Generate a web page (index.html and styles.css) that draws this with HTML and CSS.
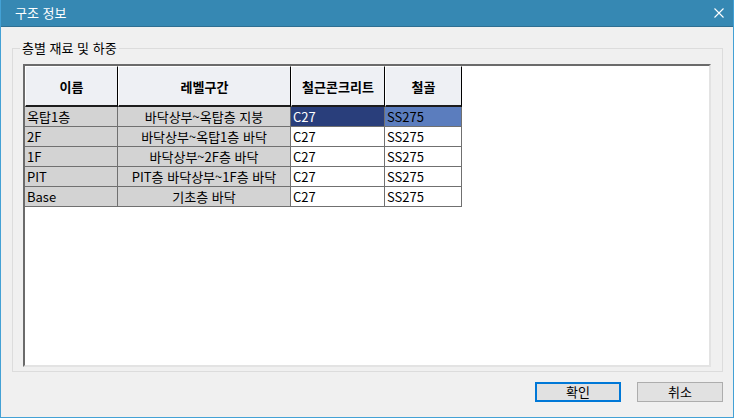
FILE: index.html
```html
<!DOCTYPE html>
<html lang="ko">
<head>
  <meta charset="UTF-8">
  <title>구조 정보</title>
  <link rel="stylesheet" href="styles.css">
</head>
<body>
  <div class="window">
    <div class="titlebar">
      <span class="title">구조 정보</span>
      <span class="close">
        <svg width="10" height="10" viewBox="0 0 10 10"><path d="M0.5 0.5 L9.5 9.5 M9.5 0.5 L0.5 9.5" stroke="#fff" stroke-width="1.1" fill="none"/></svg>
      </span>
    </div>

    <fieldset class="group">
      <legend>층별 재료 및 하중</legend>
      <div class="grid">
        <table>
          <thead>
            <tr>
              <th class="c1">이름</th>
              <th class="c2">레벨구간</th>
              <th class="c3">철근콘크리트</th>
              <th class="c4">철골</th>
            </tr>
          </thead>
          <tbody>
            <tr>
              <td class="ro">옥탑1층</td>
              <td class="ro mid">바닥상부~옥탑층 지붕</td>
              <td class="sel">C27</td>
              <td class="sel2">SS275</td>
            </tr>
            <tr>
              <td class="ro">2F</td>
              <td class="ro mid">바닥상부~옥탑1층 바닥</td>
              <td>C27</td>
              <td>SS275</td>
            </tr>
            <tr>
              <td class="ro">1F</td>
              <td class="ro mid">바닥상부~2F층 바닥</td>
              <td>C27</td>
              <td>SS275</td>
            </tr>
            <tr>
              <td class="ro">PIT</td>
              <td class="ro mid">PIT층 바닥상부~1F층 바닥</td>
              <td>C27</td>
              <td>SS275</td>
            </tr>
            <tr>
              <td class="ro">Base</td>
              <td class="ro mid">기초층 바닥</td>
              <td>C27</td>
              <td>SS275</td>
            </tr>
          </tbody>
        </table>
      </div>
    </fieldset>

    <div class="buttons">
      <button class="btn default">확인</button>
      <button class="btn">취소</button>
    </div>
  </div>
</body>
</html>
```

FILE: styles.css
```css
body { margin: 0; font-family: "Noto Sans CJK KR", "Noto Sans", sans-serif; font-size: 13px; color: #000; }
.window { width: 734px; height: 418px; box-sizing: border-box; border: 1px solid #43a1d5; border-top: none; background: #f0f0f0; }
.titlebar { display: flex; align-items: center; justify-content: space-between; height: 27px; background: #3688b3; border-bottom: 1px solid #2f6f92; box-sizing: border-box; color: #fff; }
.title { padding-left: 14px; line-height: 26px; }
.close { display: flex; margin-right: 9px; }

.group { margin: 13px 10px 0 11px; padding: 0; border: 1px solid #dcdcdc; min-width: 0; }
.group legend { margin-left: 7px; padding: 0 2px; line-height: 16px; }

.grid { margin: 8px 11px 4px 10px; height: 303px; box-sizing: border-box; background: #fff; border-left: 2px solid #6b6b6b; border-top: 2px solid #6b6b6b; border-right: 2px solid #e3e3e3; border-bottom: 2px solid #e3e3e3; }

table { border-collapse: separate; border-spacing: 0; table-layout: fixed; width: 437px; }
th { box-sizing: border-box; height: 41px; background: #eef0f4; font-weight: bold; text-align: center; padding: 0; border-left: 1px solid #fff; border-top: 1px solid #fff; border-right: 1px solid #000; border-bottom: 2px solid #1c1c1c; }
th.c1 { width: 93px; }
th.c2 { width: 173px; }
th.c3 { width: 94px; }
th.c4 { width: 77px; }
td { height: 19px; line-height: 19px; padding: 0 2px; white-space: nowrap; overflow: hidden; border-right: 1px solid #707070; border-bottom: 1px solid #707070; }
td.ro { background: #d3d3d3; }
td.mid { text-align: center; }
td.sel { background: #293e7b; color: #fff; }
td.sel2 { background: #5b7dbe; }

.buttons { display: flex; justify-content: flex-end; gap: 16px; margin: 10px 10px 0 0; }
.btn { width: 86px; height: 20px; box-sizing: border-box; padding: 0; background: #e1e1e1; border: 1px solid #adadad; font-family: inherit; font-size: 13px; line-height: 16px; color: #000; }
.btn.default { border: 2px solid #0078d7; }
```
